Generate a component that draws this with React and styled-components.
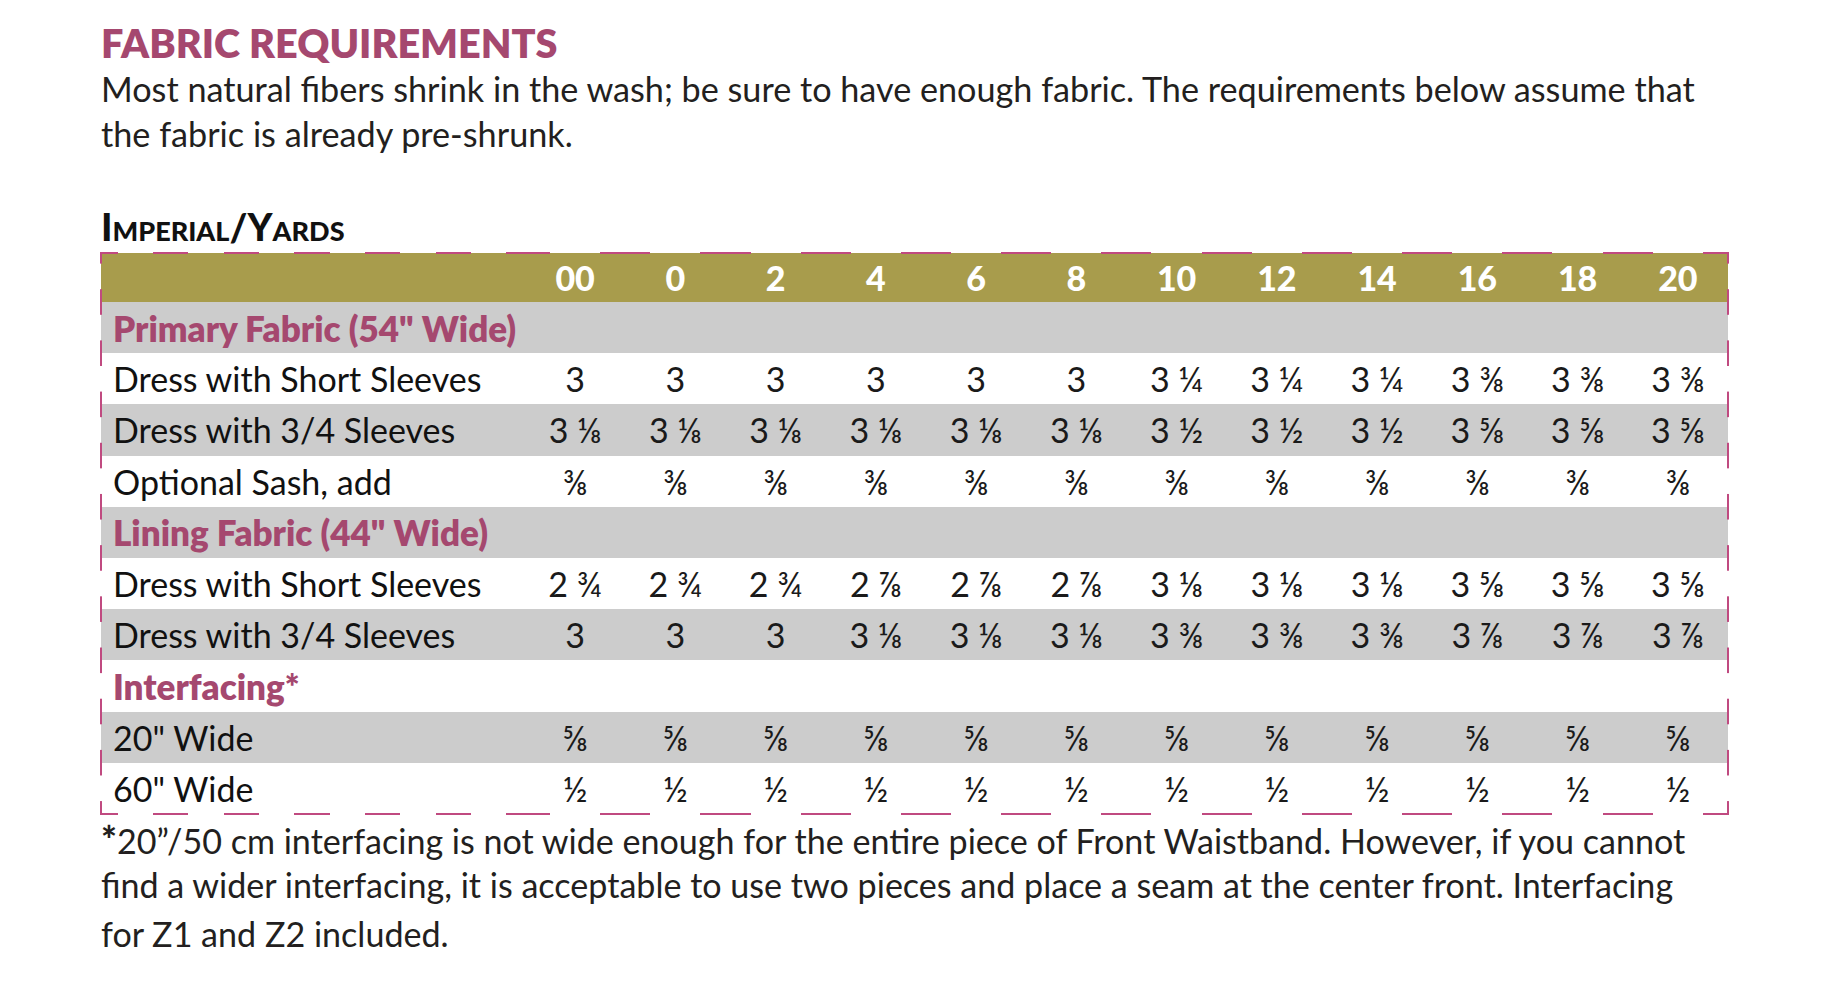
import React from 'react';
import styled, { createGlobalStyle } from 'styled-components';

const PINK = '#a5486f';
const DASH = '#c04a80';

const Global = createGlobalStyle`
  html, body { margin: 0; padding: 0; background: #fff; }
  body { font-family: Lato, "Liberation Sans", sans-serif; color: #231f20; }
`;

const Page = styled.div`
  width: 1826px;
  min-height: 996px;
  box-sizing: border-box;
  padding: 20px 0 0 101px;
`;

const Title = styled.h1`
  margin: 0;
  font-size: 39.6px;
  line-height: 46px;
  font-weight: 800;
  color: ${PINK};
`;

const Intro = styled.p`
  margin: 0;
  font-size: 34.2px;
  line-height: 45px;
`;

const SubHeading = styled.h2`
  margin: 50px 0 7px;
  font-size: 38px;
  line-height: 40px;
  font-weight: 900;
  font-variant: small-caps;
  color: #111;
`;

const Frame = styled.div`
  position: relative;
  width: 1627px;
  &::after {
    content: '';
    position: absolute;
    inset: -1px;
    pointer-events: none;
    background-image:
      repeating-linear-gradient(90deg, ${DASH} 0 17.7px, transparent 17.7px 53px, ${DASH} 53px 70.67px),
      repeating-linear-gradient(90deg, ${DASH} 0 25px, transparent 25px 75.2px, ${DASH} 75.2px 100.25px),
      repeating-linear-gradient(90deg, ${DASH} 0 17.7px, transparent 17.7px 53px, ${DASH} 53px 70.67px),
      repeating-linear-gradient(90deg, ${DASH} 0 25px, transparent 25px 75.2px, ${DASH} 75.2px 100.25px),
      linear-gradient(180deg, ${DASH} 0 12.6px, transparent 12.6px 38.6px, ${DASH} 38.6px),
      linear-gradient(180deg, ${DASH} 0 12.6px, transparent 12.6px 38.6px, ${DASH} 38.6px);
    background-size:
      425px 2px, 1204px 2px, 425px 2px, 1204px 2px, 2px 51.2px, 2px 51.2px;
    background-position:
      0 0, 425px 0, 0 100%, 425px 100%, 0 -1.2px, 100% -1.2px;
    background-repeat: no-repeat, no-repeat, no-repeat, no-repeat, repeat-y, repeat-y;
  }
`;

const Row = styled.div`
  display: grid;
  grid-template-columns: 424px repeat(12, 1fr);
  align-items: center;
  height: ${p => (p.$head ? '49px' : '51.2px')};
  background: ${p => (p.$head ? '#a89c4c' : p.$shade ? '#cccccc' : '#ffffff')};
  font-size: 34px;
`;

const Label = styled.div`
  padding-left: 12px;
  white-space: nowrap;
  font-weight: ${p => (p.$section ? 800 : 400)};
  font-size: ${p => (p.$section ? '35px' : '34px')};
  color: ${p => (p.$section ? PINK : '#111')};
`;

const Cell = styled.div`
  text-align: center;
  white-space: nowrap;
  font-weight: ${p => (p.$head ? 900 : 400)};
  color: ${p => (p.$head ? '#ffffff' : '#1a1a1a')};
`;

const Footnote = styled.p`
  margin: 4px 0 0;
  font-size: 34.1px;
  line-height: 44px;
`;

const Star = styled.b`
  font-weight: 900;
  font-size: 1.1em;
`;

const LastLine = styled.span`
  display: block;
  margin-top: 5px;
`;

const sizes = ['00', '0', '2', '4', '6', '8', '10', '12', '14', '16', '18', '20'];
const rep = (v, n) => Array(n).fill(v);

const rows = [
  { section: 'Primary Fabric (54" Wide)' },
  { label: 'Dress with Short Sleeves', vals: [...rep('3', 6), ...rep('3 ¼', 3), ...rep('3 ⅜', 3)] },
  { label: 'Dress with 3/4 Sleeves', vals: [...rep('3 ⅛', 6), ...rep('3 ½', 3), ...rep('3 ⅝', 3)] },
  { label: 'Optional Sash, add', vals: rep('⅜', 12) },
  { section: 'Lining Fabric (44" Wide)' },
  { label: 'Dress with Short Sleeves', vals: [...rep('2 ¾', 3), ...rep('2 ⅞', 3), ...rep('3 ⅛', 3), ...rep('3 ⅝', 3)] },
  { label: 'Dress with 3/4 Sleeves', vals: [...rep('3', 3), ...rep('3 ⅛', 3), ...rep('3 ⅜', 3), ...rep('3 ⅞', 3)] },
  { section: 'Interfacing*' },
  { label: '20" Wide', vals: rep('⅝', 12) },
  { label: '60" Wide', vals: rep('½', 12) },
];

export default function App() {
  return (
    <Page>
      <Global />
      <Title>FABRIC REQUIREMENTS</Title>
      <Intro>
        Most natural fibers shrink in the wash; be sure to have enough fabric. The requirements below assume that
        <br />
        the fabric is already pre-shrunk.
      </Intro>
      <SubHeading>Imperial/Yards</SubHeading>
      <Frame>
        <Row $head>
          <Label />
          {sizes.map(s => (
            <Cell key={s} $head>{s}</Cell>
          ))}
        </Row>
        {rows.map((r, i) => (
          <Row key={i} $shade={i % 2 === 0}>
            {r.section ? (
              <Label $section>{r.section}</Label>
            ) : (
              <>
                <Label>{r.label}</Label>
                {r.vals.map((v, j) => (
                  <Cell key={j}>{v}</Cell>
                ))}
              </>
            )}
          </Row>
        ))}
      </Frame>
      <Footnote>
        <Star>*</Star>20”/50 cm interfacing is not wide enough for the entire piece of Front Waistband. However, if you cannot
        <br />
        find a wider interfacing, it is acceptable to use two pieces and place a seam at the center front. Interfacing
        <LastLine>for Z1 and Z2 included.</LastLine>
      </Footnote>
    </Page>
  );
}
